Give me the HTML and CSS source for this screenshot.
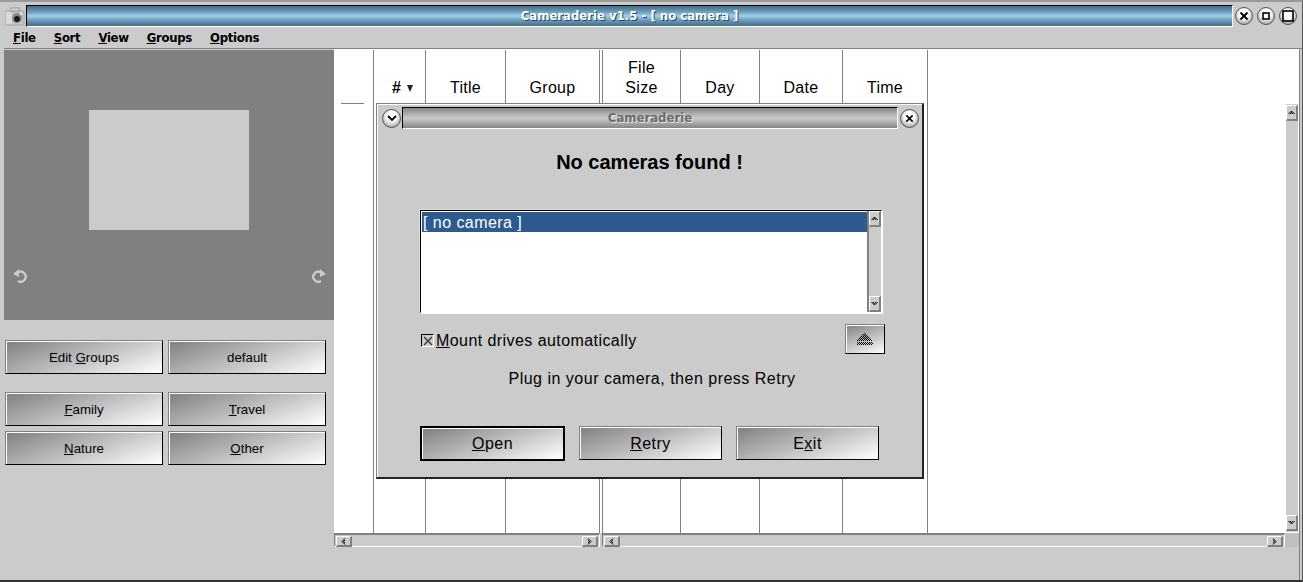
FILE: index.html
```html
<!DOCTYPE html>
<html lang="en">
<head>
    <meta charset="UTF-8">
    <title>Cameraderie v1.5 - [ no camera ]</title>
    <link rel="stylesheet" href="styles.css">
</head>
<body>
    <svg class="defs" width="0" height="0">
        <defs>
            <pattern id="dither" width="2" height="2" patternUnits="userSpaceOnUse">
                <rect width="1" height="1" fill="#000"/>
                <rect x="1" y="1" width="1" height="1" fill="#000"/>
            </pattern>
        </defs>
        <symbol id="arrow-up" viewBox="0 0 7 5"><path d="M0.5 4 L3.5 1 L6.5 4 M2 4 L3.5 2.5 L5 4" fill="none" stroke="#000"/></symbol>
        <symbol id="arrow-down" viewBox="0 0 7 5"><path d="M0.5 1 L3.5 4 L6.5 1 M2 1 L3.5 2.5 L5 1" fill="none" stroke="#000"/></symbol>
        <symbol id="arrow-left" viewBox="0 0 5 7"><path d="M4 0.5 L1 3.5 L4 6.5 M4 2 L2.5 3.5 L4 5" fill="none" stroke="#000"/></symbol>
        <symbol id="arrow-right" viewBox="0 0 5 7"><path d="M1 0.5 L4 3.5 L1 6.5 M1 2 L2.5 3.5 L1 5" fill="none" stroke="#000"/></symbol>
    </svg>

    <div class="window">
        <!-- Title bar -->
        <div class="titlebar">
            <svg class="app-icon" width="20" height="20" viewBox="0 0 20 20">
                <rect x="0" y="4" width="19" height="14" rx="1" fill="#c4c4c4" stroke="#a8a8a8"/>
                <path d="M2 5 V17 M4 5 V17 M6 5 V17" stroke="#efefef"/>
                <rect x="6" y="1" width="8" height="3" fill="#d8d8d8" stroke="#9a9a9a"/>
                <circle cx="12" cy="11" r="5" fill="#8a8a8a"/>
                <circle cx="12" cy="12" r="3" fill="#1a1a1a"/>
                <rect x="15" y="6" width="2" height="2" fill="#f4f4f4"/>
            </svg>
            <div class="title-text">Cameraderie v1.5 - [ no camera ]</div>
            <div class="win-buttons">
                <div class="round-btn">
                    <svg width="10" height="10" viewBox="0 0 10 10"><path d="M1.5 1.5 L8.5 8.5 M8.5 1.5 L1.5 8.5" stroke="#000" stroke-width="1.8"/></svg>
                </div>
                <div class="round-btn">
                    <svg width="8" height="8" viewBox="0 0 8 8"><rect x="1" y="1" width="6" height="6" fill="none" stroke="#000" stroke-width="1.6"/></svg>
                </div>
                <div class="round-btn">
                    <svg width="12" height="12" viewBox="0 0 12 12"><rect x="1" y="1" width="10" height="10" fill="none" stroke="#000" stroke-width="1.6"/></svg>
                </div>
            </div>
        </div>

        <!-- Menu -->
        <div class="menubar">
            <span class="menu-item"><u>F</u>ile</span>
            <span class="menu-item"><u>S</u>ort</span>
            <span class="menu-item"><u>V</u>iew</span>
            <span class="menu-item"><u>G</u>roups</span>
            <span class="menu-item"><u>O</u>ptions</span>
        </div>

        <div class="content">
            <!-- Left side -->
            <div class="left-pane">
                <div class="preview">
                    <div class="photo"></div>
                    <div class="rotate-row">
                        <svg width="16" height="16" viewBox="0 0 16 16"><path d="M5 4.5 A5 5 0 1 1 5 13" fill="none" stroke="#cbcbcb" stroke-width="2.4"/><path d="M0 6 L6 1 V9 Z" fill="#cbcbcb"/></svg>
                        <svg width="16" height="16" viewBox="0 0 16 16"><path d="M11 4.5 A5 5 0 1 0 11 13" fill="none" stroke="#cbcbcb" stroke-width="2.4"/><path d="M16 6 L10 1 V9 Z" fill="#cbcbcb"/></svg>
                    </div>
                </div>
                <div class="group-grid">
                    <button class="btn small">Edit <u>G</u>roups</button>
                    <button class="btn small">default</button>
                </div>
                <div class="group-grid second">
                    <button class="btn small"><u>F</u>amily</button>
                    <button class="btn small"><u>T</u>ravel</button>
                    <button class="btn small"><u>N</u>ature</button>
                    <button class="btn small"><u>O</u>ther</button>
                </div>
            </div>

            <!-- File lists -->
            <div class="right-pane">
                <div class="lists">
                    <div class="list list-a">
                        <div class="col col-blank"><div class="blank-rule"></div></div>
                        <div class="col col-num"><div class="col-head"><b>#</b><span class="sort-mark"></span></div></div>
                        <div class="col col-title"><div class="col-head">Title</div></div>
                        <div class="col col-group"><div class="col-head">Group</div></div>
                    </div>
                    <div class="list list-b">
                        <div class="col col-size"><div class="col-head">File<br>Size</div></div>
                        <div class="col col-day"><div class="col-head">Day</div></div>
                        <div class="col col-date"><div class="col-head">Date</div></div>
                        <div class="col col-time"><div class="col-head">Time</div></div>
                    </div>
                    <div class="vscroll-wrap">
                        <div class="vscroll">
                            <div class="arrow-btn"><svg width="7" height="5"><use href="#arrow-up"/></svg></div>
                            <div class="arrow-btn"><svg width="7" height="5"><use href="#arrow-down"/></svg></div>
                        </div>
                    </div>
                </div>
                <div class="hscroll-row">
                    <div class="hscroll hscroll-a">
                        <div class="arrow-btn"><svg width="5" height="7"><use href="#arrow-left"/></svg></div>
                        <div class="arrow-btn"><svg width="5" height="7"><use href="#arrow-right"/></svg></div>
                    </div>
                    <div class="hscroll hscroll-b">
                        <div class="arrow-btn"><svg width="5" height="7"><use href="#arrow-left"/></svg></div>
                        <div class="arrow-btn"><svg width="5" height="7"><use href="#arrow-right"/></svg></div>
                    </div>
                    <div class="scroll-corner"></div>
                </div>
            </div>
        </div>
    </div>

    <!-- Dialog -->
    <div class="dialog">
        <div class="dialog-bar">
            <div class="round-btn small-round">
                <svg width="10" height="6" viewBox="0 0 10 6"><path d="M1 1 L5 5 L9 1" fill="none" stroke="#000" stroke-width="1.8"/></svg>
            </div>
            <div class="dialog-title">Cameraderie</div>
            <div class="round-btn small-round">
                <svg width="9" height="9" viewBox="0 0 10 10"><path d="M1.5 1.5 L8.5 8.5 M8.5 1.5 L1.5 8.5" stroke="#000" stroke-width="1.8"/></svg>
            </div>
        </div>
        <h1 class="dialog-heading">No cameras found !</h1>
        <div class="camera-list">
            <div class="camera-items">
                <div class="camera-item">[ no camera ]</div>
            </div>
            <div class="list-scroll">
                <div class="arrow-btn"><svg width="7" height="5"><use href="#arrow-up"/></svg></div>
                <div class="arrow-btn"><svg width="7" height="5"><use href="#arrow-down"/></svg></div>
            </div>
        </div>
        <div class="mount-row">
            <div class="checkbox">
                <svg width="10" height="10" viewBox="0 0 10 10"><path d="M1 1 L9 9 M9 1 L1 9" stroke="#333" stroke-width="1.2"/></svg>
            </div>
            <div class="mount-label"><u>M</u>ount drives automatically</div>
            <button class="btn eject-btn">
                <svg width="16" height="14" viewBox="0 0 16 14" shape-rendering="crispEdges">
                    <path d="M8 0 L16 9 H0 Z" fill="url(#dither)"/>
                    <rect y="10" width="16" height="3" fill="url(#dither)"/>
                </svg>
            </button>
        </div>
        <p class="hint">Plug in your camera, then press Retry</p>
        <div class="dialog-actions">
            <button class="btn big default"><u>O</u>pen</button>
            <button class="btn big"><u>R</u>etry</button>
            <button class="btn big">E<u>x</u>it</button>
        </div>
    </div>
</body>
</html>
```

FILE: styles.css
```css
/* Base */
* {
    margin: 0;
    padding: 0;
    box-sizing: border-box;
}

body {
    width: 1303px;
    height: 582px;
    overflow: hidden;
    position: relative;
    background: #cbcbcb;
    color: #000;
    font-family: "Liberation Sans", Arial, sans-serif;
}

.defs {
    position: absolute;
}

.window {
    height: 582px;
    display: flex;
    flex-direction: column;
    border-top: 2px solid #9a9a9a;
    border-right: 1px solid #555;
    border-bottom: 2px solid #333;
}

/* Title bar */
.titlebar {
    height: 26px;
    display: flex;
    align-items: flex-start;
    padding: 3px 0 0 5px;
}

.app-icon {
    margin-top: 2px;
    margin-right: 1px;
}

.title-text {
    width: 1207px;
    height: 22px;
    border-top: 1px solid #000;
    border-left: 1px solid #000;
    border-right: 1px solid #fff;
    border-bottom: 1px solid #fff;
    background: linear-gradient(#3f6d8a, #6f9fbd 30%, #9fd0ea 50%, #6f9fbd 70%, #3f6d8a);
    color: #fff;
    font: bold 13px/20px "DejaVu Sans", sans-serif;
    font-stretch: condensed;
    text-align: center;
    text-shadow: 1px 1px 0 #23465c;
}

.win-buttons {
    display: flex;
    gap: 4px;
    margin-left: 2px;
    margin-top: 2px;
}

.round-btn {
    width: 18px;
    height: 18px;
    flex: none;
    border-radius: 50%;
    border: 1px solid #555;
    background: radial-gradient(circle at 50% 38%, #fff 35%, #d2d2d2 58%, #8c8c8c 92%);
    display: flex;
    align-items: center;
    justify-content: center;
}

/* Menu */
.menubar {
    height: 21px;
    display: flex;
    gap: 18px;
    font: bold 13px/20px "DejaVu Sans", sans-serif;
    font-stretch: condensed;
    letter-spacing: -0.3px;
    color: #000;
    border-bottom: 1px solid #808080;
    margin-left: 4px;
    padding-left: 9px;
}

/* Content */
.content {
    display: flex;
    height: 531px;
    padding-left: 4px;
}

.left-pane {
    width: 330px;
    padding-top: 1px;
}

.preview {
    height: 270px;
    background: #808080;
    padding-top: 60px;
}

.photo {
    width: 160px;
    height: 120px;
    margin-left: 85px;
    background: #cbcbcb;
}

.rotate-row {
    display: flex;
    justify-content: space-between;
    margin-top: 38px;
    padding: 0 8px 0 9px;
}

.group-grid {
    display: grid;
    grid-template-columns: 158px 158px;
    column-gap: 5px;
    row-gap: 5px;
    margin-top: 20px;
    padding-left: 1px;
}

.group-grid.second {
    margin-top: 18px;
}

/* Buttons */
.btn {
    height: 34px;
    border: 1px solid #808080;
    border-right-color: #000;
    border-bottom-color: #000;
    box-shadow: inset 1px 1px 0 #fff;
    background: linear-gradient(160deg, #7f7f7f, #c4c4c4 55%, #fff);
    font-family: "Liberation Sans", Arial, sans-serif;
    color: #000;
}

.btn.small {
    font-size: 13.3px;
}

.btn.big {
    width: 143px;
    height: 34px;
    padding-top: 2px;
    font-size: 16px;
    letter-spacing: 0.5px;
}

.btn.default {
    width: 145px;
    height: 35px;
    padding-top: 1px;
    border: 2px solid #000;
}

.eject-btn {
    width: 40px;
    height: 30px;
    display: flex;
    align-items: center;
    justify-content: center;
    margin-left: auto;
    margin-right: 0;
}

/* File lists */
.right-pane {
    width: 966px;
    display: flex;
    flex-direction: column;
    border-right: 1px solid #808080;
    border-top: 1px solid #fff;
}

.lists {
    height: 483px;
    display: flex;
    background: #fff;
}

.list {
    display: flex;
}

.list-a {
    width: 266px;
    margin-right: 2px;
}

.list-b {
    flex: 1;
    border-left: 1px solid #808080;
}

.col {
    border-right: 1px solid #808080;
}

.col-blank { width: 40px; padding: 53px 6px 0 7px; }
.col-num { width: 52px; }
.col-title { width: 80px; }
.col-group { width: 94px; }
.col-size { width: 78px; }
.col-day { width: 79px; }
.col-date { width: 83px; }
.col-time { width: 85px; }

.blank-rule {
    height: 1px;
    width: 23px;
    background: #808080;
}

.col-head {
    height: 48px;
    display: flex;
    align-items: flex-end;
    justify-content: center;
    text-align: center;
    font-size: 16px;
    line-height: 20px;
    letter-spacing: 0.3px;
    color: #000;
}

.col-num .col-head {
    padding-left: 6px;
}

.sort-mark {
    width: 0;
    height: 0;
    margin: 0 0 6px 6px;
    border-left: 3.5px solid transparent;
    border-right: 3.5px solid transparent;
    border-top: 7px solid #222;
}

.vscroll-wrap {
    width: 14px;
    padding-top: 53px;
}

.vscroll {
    height: 429px;
    padding: 1px 0;
    background: #cbcbcb;
    border-top: 1px solid #fff;
    border-left: 1px solid #fff;
    border-right: 1px solid #fff;
    display: flex;
    flex-direction: column;
    justify-content: space-between;
}

.arrow-btn {
    width: 16px;
    height: 16px;
    flex: none;
    display: flex;
    align-items: center;
    justify-content: center;
    background: #cbcbcb;
    border-style: solid;
    border-width: 1px 2px 2px 1px;
    border-color: #fff #808080 #808080 #fff;
}

.vscroll .arrow-btn,
.list-scroll .arrow-btn {
    width: 12px;
}

.hscroll-row {
    display: flex;
    height: 14px;
}

.hscroll {
    display: flex;
    justify-content: space-between;
    padding: 1px;
    border-top: 2px solid #808080;
    border-bottom: 1px solid #fff;
}

.hscroll .arrow-btn {
    height: 11px;
}

.hscroll-a {
    width: 266px;
    margin-right: 2px;
    border-left: 1px solid #808080;
    border-right: 1px solid #fff;
}

.hscroll-b {
    flex: 1;
    border-left: 1px solid #808080;
    border-right: 1px solid #fff;
}

.scroll-corner {
    width: 14px;
    background: #c0c0c0;
}

/* Dialog */
.dialog {
    position: absolute;
    left: 376px;
    top: 103px;
    width: 548px;
    height: 376px;
    background: #cbcbcb;
    border: 1px solid #808080;
    border-right: 2px solid #222;
    border-bottom: 2px solid #222;
    box-shadow: inset 1px 1px 0 #fff;
    padding: 3px 3px 0 5px;
    display: flex;
    flex-direction: column;
}

.dialog-bar {
    display: flex;
    align-items: center;
    gap: 1px;
}

.small-round {
    width: 19px;
    height: 19px;
}

.dialog-title {
    flex: 1;
    height: 22px;
    margin-right: 1px;
    border-top: 1px solid #000;
    border-left: 1px solid #000;
    border-right: 1px solid #fff;
    border-bottom: 1px solid #fff;
    background: linear-gradient(#858585, #cbcbcb 50%, #858585);
    color: #6a6a6a;
    font: bold 13px/20px "DejaVu Sans", sans-serif;
    font-stretch: condensed;
    text-align: center;
    text-shadow: 1px 1px 0 #e6e6e6;
}

.dialog-heading {
    margin-top: 21px;
    padding-right: 2px;
    font-size: 20px;
    line-height: 24px;
    font-weight: bold;
    text-align: center;
    color: #000;
}

.camera-list {
    display: flex;
    width: 462px;
    height: 103px;
    margin: 36px 0 0 38px;
    border: 1px solid #000;
    border-right-color: #fff;
    border-bottom-color: #fff;
    box-shadow: 1px 1px 0 #fff, -1px -1px 0 #ddd;
    background: #fff;
}

.camera-items {
    flex: 1;
    padding-left: 1px;
    padding-top: 1px;
}

.camera-item {
    height: 20px;
    background: #2d5a8f;
    color: #fff;
    font-size: 16px;
    line-height: 22px;
    letter-spacing: 0.45px;
    padding-left: 1px;
}

.list-scroll {
    width: 14px;
    background: #cbcbcb;
    border-left: 2px solid #808080;
    display: flex;
    flex-direction: column;
    justify-content: space-between;
}

.mount-row {
    display: flex;
    align-items: center;
    height: 30px;
    margin: 11px 34px 0 39px;
}

.checkbox {
    width: 13px;
    height: 13px;
    flex: none;
    margin-top: 3px;
    margin-right: 2px;
    background: #cbcbcb;
    border: 1px solid #000;
    border-right-color: #fff;
    border-bottom-color: #fff;
    display: flex;
    align-items: center;
    justify-content: center;
}

.mount-label {
    font-size: 16px;
    letter-spacing: 0.43px;
    margin-top: 3px;
    color: #000;
}

.hint {
    margin-top: 15px;
    padding-left: 3px;
    font-size: 16px;
    line-height: 20px;
    letter-spacing: 0.5px;
    text-align: center;
    color: #000;
}

.dialog-actions {
    display: flex;
    align-items: flex-start;
    gap: 14px;
    margin: 37px 0 0 38px;
}
```
